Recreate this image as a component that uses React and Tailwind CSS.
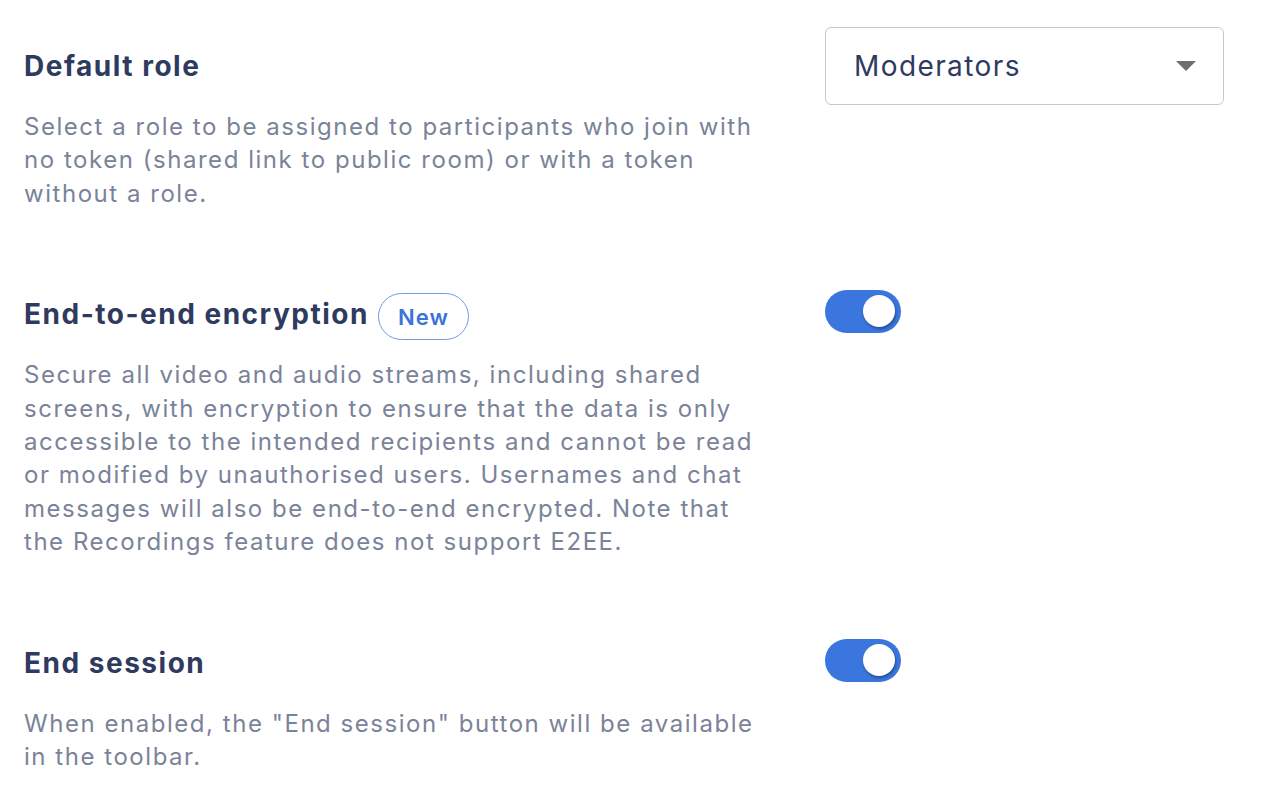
import React from "react";

function Toggle() {
  return (
    <div className="relative h-[43px] w-[76px] rounded-full bg-[#3b76de]">
      <div className="absolute right-[6px] top-[5px] h-[32px] w-[32px] rounded-full bg-white shadow-[1px_2px_3px_rgba(0,0,0,0.35)]" />
    </div>
  );
}

export default function App() {
  const font = { fontFamily: "Inter, 'Noto Sans', sans-serif" };
  const title = "flex h-[40px] items-center text-[28px] font-bold leading-[40px] tracking-[0.054em] text-[#2f3a5f]";
  const desc = "mt-[24px] text-[24px] leading-[33.4px] tracking-[0.064em] text-[#7a8399]";
  return (
    <div className="min-h-[800px] w-[1264px] bg-white px-[24px] pt-[27px]" style={font}>
      {/* Row 1 */}
      <div className="flex">
        <div className="w-[750px] shrink-0 pt-[19px]">
          <div className={title}>Default role</div>
          <p className={desc}>
            Select a role to be assigned to participants who join with no token (shared link to public room) or with a token without a role.
          </p>
        </div>
        <div className="ml-[51px]">
          <div className="flex h-[78px] w-[399px] items-center justify-between rounded-[6px] border-[1.5px] border-[#c5c8ce] pl-[28px] pr-[27px]">
            <span className="text-[28px] tracking-[0.05em] text-[#2f3a5f]">Moderators</span>
            <svg width="20" height="10" viewBox="0 0 20 10">
              <path d="M0 0 H20 L10 10 Z" fill="#6e6e6e" />
            </svg>
          </div>
        </div>
      </div>

      {/* Row 2 */}
      <div className="mt-[84px] flex">
        <div className="w-[750px] shrink-0">
          <div className={title + " gap-[9px]"}>
            <span>End-to-end encryption</span>
            <span className="mt-[5px] flex h-[47px] items-center rounded-full border-[1.5px] border-[#6f9ce6] px-[19px] text-[22px] font-semibold tracking-[0.05em] text-[#3a74d9]">
              New
            </span>
          </div>
          <p className={desc}>
            Secure all video and audio streams, including shared screens, with encryption to ensure that the data is only accessible to the intended recipients and cannot be read or modified by unauthorised users. Usernames and chat messages will also be end-to-end encrypted. Note that the Recordings feature does not support E2EE.
          </p>
        </div>
        <div className="ml-[51px] -mt-[4px]">
          <Toggle />
        </div>
      </div>

      {/* Row 3 */}
      <div className="mt-[84px] flex">
        <div className="w-[750px] shrink-0">
          <div className={title}>End session</div>
          <p className={desc}>
            When enabled, the "End session" button will be available in the toolbar.
          </p>
        </div>
        <div className="ml-[51px] -mt-[4px]">
          <Toggle />
        </div>
      </div>
    </div>
  );
}
